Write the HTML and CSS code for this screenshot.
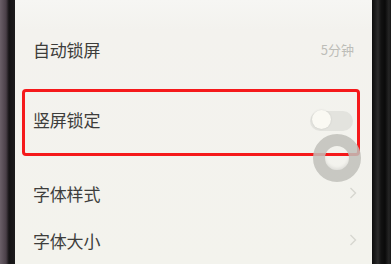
FILE: index.html
```html
<!DOCTYPE html>
<html lang="zh">
<head>
    <meta charset="UTF-8">
    <meta name="viewport" content="width=device-width, initial-scale=1.0">
    <title>设置</title>
    <link rel="stylesheet" href="styles.css">
</head>
<body>

    <div class="phone">
        <div class="bezel-left"></div>

        <div class="screen">
            <div class="row row-first">
                <span class="label">自动锁屏</span>
                <span class="value">5分钟</span>
            </div>

            <div class="highlight">
                <div class="row row-box">
                    <span class="label">竖屏锁定</span>
                    <div class="toggle"><div class="knob"></div></div>
                </div>
            </div>

            <div class="row row-style">
                <span class="label">字体样式</span>
                <svg class="chevron" width="8" height="12" viewBox="0 0 8 12">
                    <polyline points="1.5,1 6.5,6 1.5,11" fill="none" stroke="#d6d6d0" stroke-width="1.4"/>
                </svg>
            </div>

            <div class="row row-size">
                <span class="label">字体大小</span>
                <svg class="chevron" width="8" height="12" viewBox="0 0 8 12">
                    <polyline points="1.5,1 6.5,6 1.5,11" fill="none" stroke="#d6d6d0" stroke-width="1.4"/>
                </svg>
            </div>

            <!-- touch indicator -->
            <div class="touch"></div>
        </div>

        <div class="bezel-right"></div>
    </div>

</body>
</html>
```

FILE: styles.css
```css
body {
    margin: 0;
    font-family: "Noto Sans CJK SC", "Noto Sans", sans-serif;
    background-color: #111;
}
.phone {
    display: flex;
    width: 391px;
    height: 264px;
    overflow: hidden;
}
.bezel-left {
    width: 15px;
    background: linear-gradient(to right, #6a5f68 0px, #4a4048 6px, #151315 9px, #1c1b1c 15px);
}
.bezel-right {
    width: 19px;
    background: linear-gradient(to right, #0e0e0e 0px, #1b1b1b 3px, #2c2c2c 6px, #121212 9px, #0a0a0a 13px, #262626 17px, #141414 19px);
}
.screen {
    position: relative;
    flex: 1;
    background: linear-gradient(to bottom, #f6f6f3 0px, #f3f2ee 30px, #f3f3ed 264px);
}
.row {
    display: flex;
    align-items: center;
    justify-content: space-between;
    padding: 0 17px 0 18px;
}
.row-first {
    margin-top: 14px;
    height: 70px;
}
.row-style {
    margin-top: 13px;
    height: 48px;
}
.row-size {
    height: 46px;
}
.label {
    font-size: 17px;
    color: #3d3d3b;
    letter-spacing: -0.2px;
}
.value {
    font-size: 13px;
    color: #bdbdb8;
    margin-right: 1px;
}
.chevron {
    margin-right: -2px;
}
.highlight {
    margin: 5px 12px 0 7px;
    height: 61px;
    border: 3px solid #f5191b;
    border-radius: 4px;
}
.row-box {
    height: 55px;
    padding: 0 4px 6px 8px;
}
.toggle {
    position: relative;
    width: 43px;
    height: 20px;
    border-radius: 10px;
    background-color: #e3e3de;
    margin-top: 2px;
}
.knob {
    position: absolute;
    left: 2px;
    top: -1px;
    width: 19px;
    height: 19px;
    border-radius: 50%;
    background-color: #faf9f3;
    box-shadow: 0 0 2px rgba(0, 0, 0, 0.12);
}
.touch {
    position: absolute;
    left: 298px;
    top: 134px;
    width: 24px;
    height: 24px;
    border-radius: 50%;
    border: 12px solid rgba(192, 192, 186, 0.85);
    box-shadow: inset 0 -2px 3px rgba(0, 0, 0, 0.08);
}
```
